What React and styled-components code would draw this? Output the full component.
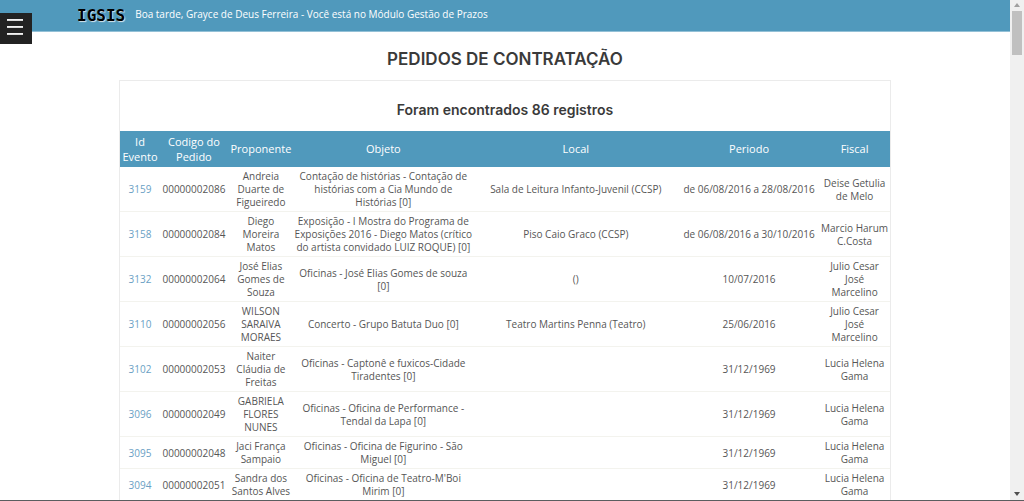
import React from "react";
import styled, { createGlobalStyle } from "styled-components";

const GlobalStyle = createGlobalStyle`
  * { box-sizing: border-box; }
  body {
    margin: 0;
    background: #fff;
    color: #565656;
    font-family: "Open Sans", "Noto Sans", sans-serif;
    font-size: 10px;
    line-height: 13px;
  }
`;

const Viewport = styled.div`
  display: flex;
  height: 100vh;
  overflow: hidden;
  position: relative;
  border-bottom: 1px solid #5a5d5f;
`;

const Page = styled.div`
  flex: 1;
  min-width: 0;
  height: 100%;
  overflow: hidden;
`;

const TopBar = styled.header`
  display: flex;
  align-items: center;
  gap: 10px;
  height: 32px;
  padding: 0 0 2px 77px;
  background: #5099bc;
  border-bottom: 1px solid #93c0d6;
  color: #fff;
`;

const Logo = styled.span`
  color: #000;
  font-family: "DejaVu Sans Mono", monospace;
  font-size: 16px;
  font-weight: 700;
  line-height: 20px;
  padding-top: 2px;
  text-shadow: 1px 1px 1px #d5e4ec;
`;

const Greeting = styled.span`
  white-space: nowrap;
`;

const MenuButton = styled.button`
  position: absolute;
  top: 13px;
  left: 0;
  display: flex;
  flex-direction: column;
  align-items: center;
  justify-content: center;
  gap: 5px;
  width: 32px;
  height: 31px;
  padding: 0 2px 3px 0;
  border: 0;
  background: #222;
`;

const MenuLine = styled.span`
  width: 16px;
  height: 2px;
  background: linear-gradient(#fff, #ccc);
`;

const Main = styled.main`
  max-width: 772px;
  margin: 0 auto;
  padding-top: 17px;
  text-align: center;
`;

const Heading = styled.h1`
  margin: 0 0 11px;
  color: #3a3a3a;
  font-family: Inter, "Open Sans", sans-serif;
  font-size: 17px;
  font-weight: 600;
  line-height: 20px;
`;

const Panel = styled.section`
  border: 1px solid #ebebeb;
`;

const Subheading = styled.h2`
  margin: 0;
  padding: 20px 0 12px;
  color: #3a3a3a;
  font-family: Inter, "Open Sans", sans-serif;
  font-size: 14px;
  font-weight: 600;
  line-height: 18px;
`;

const Table = styled.table`
  width: 100%;
  table-layout: fixed;
  border-collapse: separate;
  border-spacing: 0;
`;

const Col = styled.col`
  width: ${(p) => p.$share}%;
`;

const Th = styled.th`
  height: 36px;
  padding: 0 0 1px;
  background: #5099bc;
  color: #fff;
  font-size: 11px;
  font-weight: 400;
  line-height: 15px;
`;

const Td = styled.td`
  padding: 3px 0 2px;
  border-bottom: 1px solid #f3f3ee;
  vertical-align: middle;
  white-space: pre-line;
`;

const EventLink = styled.a`
  color: #6a9fc4;
  text-decoration: none;
`;

const ScrollTrack = styled.div`
  display: flex;
  flex-direction: column;
  justify-content: space-between;
  align-items: center;
  width: 14px;
  height: 100%;
  padding: 3px 0 4px;
  background: #f0f0f0;
`;

const ScrollTop = styled.div`
  display: flex;
  flex-direction: column;
  align-items: center;
  gap: 4px;
`;

const ScrollThumb = styled.div`
  width: 10px;
  height: 44px;
  background: #c0c0c0;
`;

const columns = [
  ["Id Evento", 5.2],
  ["Codigo do Pedido", 8.8],
  ["Proponente", 8.6],
  ["Objeto", 23.2],
  ["Local", 26.8],
  ["Periodo", 18.2],
  ["Fiscal", 9.2],
];

const rows = [
  ["3159", "00000002086", "Andreia\nDuarte de\nFigueiredo", "Contação de histórias - Contação de histórias com a Cia Mundo de Histórias [0]", "Sala de Leitura Infanto-Juvenil (CCSP)", "de 06/08/2016 a 28/08/2016", "Deise Getulia\nde Melo"],
  ["3158", "00000002084", "Diego\nMoreira\nMatos", "Exposição - I Mostra do Programa de Exposições 2016 - Diego Matos (crítico do artista convidado LUIZ ROQUE) [0]", "Piso Caio Graco (CCSP)", "de 06/08/2016 a 30/10/2016", "Marcio Harum\nC.Costa"],
  ["3132", "00000002064", "José Elias\nGomes de\nSouza", "Oficinas - José Elias Gomes de souza [0]", "()", "10/07/2016", "Julio Cesar\nJosé\nMarcelino"],
  ["3110", "00000002056", "WILSON\nSARAIVA\nMORAES", "Concerto - Grupo Batuta Duo [0]", "Teatro Martins Penna (Teatro)", "25/06/2016", "Julio Cesar\nJosé\nMarcelino"],
  ["3102", "00000002053", "Naiter\nCláudia de\nFreitas", "Oficinas - Captonê e fuxicos-Cidade Tiradentes [0]", "", "31/12/1969", "Lucia Helena\nGama"],
  ["3096", "00000002049", "GABRIELA\nFLORES\nNUNES", "Oficinas - Oficina de Performance - Tendal da Lapa [0]", "", "31/12/1969", "Lucia Helena\nGama"],
  ["3095", "00000002048", "Jaci França\nSampaio", "Oficinas - Oficina de Figurino - São Miguel [0]", "", "31/12/1969", "Lucia Helena\nGama"],
  ["3094", "00000002051", "Sandra dos\nSantos Alves", "Oficinas - Oficina de Teatro-M'Boi Mirim [0]", "", "31/12/1969", "Lucia Helena\nGama"],
];

export default function App() {
  return (
    <>
      <GlobalStyle />
      <Viewport>
        <Page>
          <TopBar>
            <Logo>IGSIS</Logo>
            <Greeting>
              Boa tarde, Grayce de Deus Ferreira - Você está no Módulo Gestão de Prazos
            </Greeting>
          </TopBar>
          <Main>
            <Heading>PEDIDOS DE CONTRATAÇÃO</Heading>
            <Panel>
              <Subheading>Foram encontrados 86 registros</Subheading>
              <Table>
                <colgroup>
                  {columns.map(([name, share]) => <Col key={name} $share={share} />)}
                </colgroup>
                <thead>
                  <tr>{columns.map(([name]) => <Th key={name} scope="col">{name}</Th>)}</tr>
                </thead>
                <tbody>
                  {rows.map(([id, code, person, subject, place, period, inspector]) => (
                    <tr key={id}>
                      <Td><EventLink href={"#" + id}>{id}</EventLink></Td>
                      <Td>{code}</Td>
                      <Td>{person}</Td>
                      <Td>{subject}</Td>
                      <Td>{place}</Td>
                      <Td>{period}</Td>
                      <Td>{inspector}</Td>
                    </tr>
                  ))}
                </tbody>
              </Table>
            </Panel>
          </Main>
        </Page>
        <ScrollTrack aria-hidden="true">
          <ScrollTop>
            <svg width="6" height="4" viewBox="0 0 6 4"><path d="M3 0 6 4H0Z" fill="#a0a0a0" /></svg>
            <ScrollThumb />
          </ScrollTop>
          <svg width="6" height="4" viewBox="0 0 6 4"><path d="M0 0H6L3 4Z" fill="#505050" /></svg>
        </ScrollTrack>
        <MenuButton type="button" aria-label="Menu">
          <MenuLine /><MenuLine /><MenuLine />
        </MenuButton>
      </Viewport>
    </>
  );
}
